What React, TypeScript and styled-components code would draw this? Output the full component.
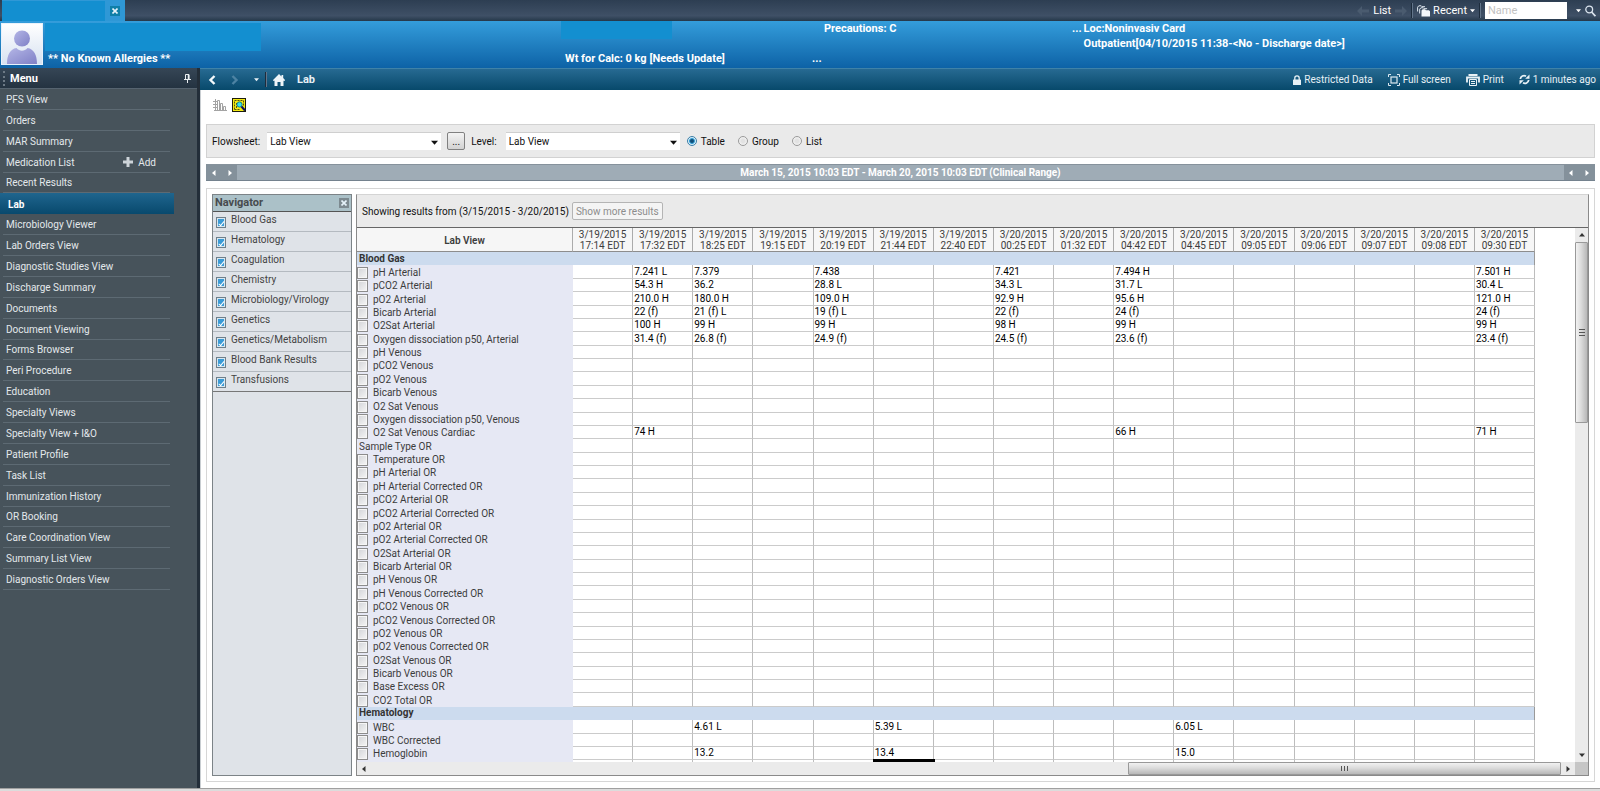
import React from 'react';
import styled, { createGlobalStyle, css } from 'styled-components';

const GlobalStyle = createGlobalStyle`
  *, *::before, *::after { box-sizing: border-box; }
  body { margin: 0; background: #fff; }
  body, button, input, select, table {
    font-family: Roboto, "Noto Sans", sans-serif;
    font-size: 10px;
    line-height: 15px;
  }
  button, input, select { margin: 0; padding: 0; border: 0; background: none; color: inherit; }
  svg { display: block; flex: none; }
`;

/* ---------- Shell ---------- */

const Shell = styled.div`
  display: flex;
  flex-direction: column;
  height: 100vh;
  padding-bottom: 2px;
  background: #dcdcdc;
`;

const Body = styled.div`
  flex: 1;
  min-height: 0;
  display: flex;
  border-bottom: 1px solid #a0a0a0;
`;

const Main = styled.main`
  flex: 1;
  min-width: 0;
  display: flex;
  flex-direction: column;
  background: #fff;
`;

/* ---------- Tab strip ---------- */

const TabStrip = styled.header`
  height: 21px;
  display: flex;
  justify-content: space-between;
  padding-left: 2px;
  color: #fff;
  font-size: 11px;
  background: linear-gradient(#2d3e52, #3f5066 75%, #25384a);
`;

const PatientTab = styled.div`
  width: 123px;
  display: flex;
  align-items: center;
  justify-content: space-between;
  padding-right: 5px;
  background: #2f98d6;
`;

const Redacted = styled.div<{ $width: number; $height: number }>`
  width: ${(p) => p.$width}px;
  height: ${(p) => p.$height}px;
  background: #138fd0;
`;

const CloseButton = styled.button<{ $muted?: boolean }>`
  width: 10px;
  height: 10px;
  display: grid;
  place-items: center;
  color: #e6f3fa;
  background: ${(p) => (p.$muted ? '#7d8a90' : '#0f7fa8')};
`;

const StripTools = styled.div`
  display: flex;
  align-items: center;
  gap: 4px;
  padding-right: 4px;
`;

const FlatButton = styled.button`
  display: flex;
  align-items: center;
  gap: 3px;
  color: inherit;
  white-space: nowrap;
  font-size: 11px;
`;

const Separator = styled.span`
  width: 2px;
  height: 15px;
  background: #1d2c3c;
  border-right: 1px solid #63758a;
`;

const NameSearch = styled.input`
  width: 82px;
  height: 17px;
  margin-right: 5px;
  padding: 0 3px;
  background: #fff;
  color: #333;
  font-size: 11px;
  &::placeholder { color: #c2c2c2; opacity: 1; }
`;

/* ---------- Patient banner ---------- */

const Banner = styled.section`
  height: 47px;
  display: grid;
  grid-template-columns: 561fr 251fr 260fr 528fr;
  color: #fff;
  font-size: 11px;
  font-weight: 700;
  white-space: nowrap;
  background: linear-gradient(#349ddb, #0d62a6);
`;

const BannerIdentity = styled.div`
  display: flex;
  gap: 2px;
  padding: 2px 0 0 1px;
`;

const Photo = styled.div`
  width: 42px;
  height: 42px;
  background: linear-gradient(#fff, #d7e2f1);
  border: 1px solid #e9f2fb;
`;

const BannerCell = styled.div`
  display: flex;
  flex-direction: column;
  justify-content: space-between;
  padding-bottom: 2px;
`;

const BannerStack = styled.div`
  display: flex;
  flex-direction: column;
`;

const BannerText = styled.span<{ $indent?: number }>`
  padding-left: ${(p) => p.$indent ?? 0}px;
`;

const Location = styled.div`
  display: flex;
  gap: 2px;
`;

/* ---------- Sidebar ---------- */

const Sidebar = styled.nav`
  width: 200px;
  flex: none;
  background: #47535b;
  border-right: 3px solid #232e39;
`;

const SidebarHead = styled.div`
  height: 21px;
  display: flex;
  align-items: center;
  justify-content: space-between;
  padding: 0 6px 0 3px;
  color: #fff;
  font-size: 11px;
  font-weight: 700;
  background: linear-gradient(#364656, #243341);
  border-bottom: 1px solid #566470;
`;

const HeadTitle = styled.span`
  padding-left: 5px;
  border-left: 2px dotted #6d7a86;
`;

const MenuList = styled.ul`
  margin: 0;
  padding: 0;
  list-style: none;
  height: 501px;
  display: grid;
  grid-auto-rows: 1fr;
`;

const MenuItem = styled.li<{ $active?: boolean }>`
  display: flex;
  align-items: center;
  justify-content: space-between;
  width: 167px;
  margin-left: 3px;
  padding: 1px 14px 0 3px;
  border-bottom: 1px solid #5d6a73;
  color: #e3e8eb;
  ${(p) =>
    p.$active &&
    css`
      width: 174px;
      margin-left: 0;
      padding-left: 8px;
      border-bottom: 0;
      color: #fff;
      font-weight: 700;
      background: linear-gradient(#1f658e, #08496d);
    `}
`;

const MenuLink = styled.a`
  color: inherit;
  text-decoration: none;
  white-space: nowrap;
`;

const AddButton = styled.button`
  display: flex;
  align-items: center;
  gap: 5px;
`;

/* ---------- Navigation bar ---------- */

const NavBar = styled.div`
  height: 22px;
  flex: none;
  display: flex;
  align-items: center;
  justify-content: space-between;
  padding: 0 4px 0 8px;
  color: #e8f1f6;
  background: linear-gradient(#276a92, #07496b);
  border-top: 1px solid #3f82a8;
`;

const NavGroup = styled.div<{ $gap: number }>`
  display: flex;
  align-items: center;
  gap: ${(p) => p.$gap}px;
`;

const NavAction = styled.button`
  display: flex;
  align-items: center;
  gap: 3px;
  white-space: nowrap;
`;

const PageTitle = styled.h1`
  margin: 0;
  font-size: 11px;
  line-height: 15px;
  font-weight: 700;
  padding-left: 6px;
`;

/* ---------- Content ---------- */

const Content = styled.div`
  flex: 1;
  min-height: 0;
  display: flex;
  flex-direction: column;
  gap: 6px;
  padding: 0 5px 6px 5px;
  border-left: 1px solid #c9ced2;
`;

const IconTools = styled.div`
  height: 22px;
  flex: none;
  display: flex;
  align-items: flex-end;
  gap: 5px;
  padding: 0 7px;
`;

const Filters = styled.form`
  height: 34px;
  margin-top: 6px;
  flex: none;
  display: flex;
  align-items: center;
  gap: 6px;
  padding: 0 5px;
  background: #eaeaea;
  border: 1px solid #d2d2d2;
  color: #111;
`;

const Field = styled.label<{ $gap: number }>`
  display: flex;
  align-items: center;
  gap: ${(p) => p.$gap}px;
`;

const SelectBox = styled.span`
  position: relative;
  width: 174px;
  height: 18px;
  background: #fff;
  border-top: 1px solid #cfcfcf;
`;

const Select = styled.select`
  appearance: none;
  display: block;
  width: 100%;
  height: 17px;
  padding: 0 20px 0 3px;
`;

const SelectArrow = styled.span`
  position: absolute;
  right: 3px;
  top: 6px;
  pointer-events: none;
`;

const PushButton = styled.button<{ $wide?: boolean }>`
  height: 18px;
  min-width: 18px;
  padding: 0 ${(p) => (p.$wide ? 3 : 0)}px;
  border: 1px solid ${(p) => (p.$wide ? '#b4b4b4' : '#808080')};
  border-radius: 2px;
  background: ${(p) => (p.$wide ? '#f4f4f4' : 'linear-gradient(#f3f3f3, #d2d2d2)')};
  color: ${(p) => (p.$wide ? '#8c8c8c' : '#111')};
`;

const RadioGroup = styled.div`
  display: flex;
  gap: 13px;
  padding-left: 1px;
`;

const Radio = styled.input`
  appearance: none;
  width: 10px;
  height: 10px;
  border: 1px solid #9a9a9a;
  border-radius: 50%;
  background: radial-gradient(#e2e2e2 30%, #fff);
  &:checked {
    border-color: #3b7ea6;
    background: radial-gradient(#124e77 25%, #3aa3d8 45%, #d8eefa 60%);
  }
`;

const RangeBar = styled.div`
  height: 17px;
  flex: none;
  display: flex;
  justify-content: space-between;
  align-items: stretch;
  color: #fff;
  font-weight: 700;
  background: #9facb6;
  border-top: 1px solid #86929c;
  border-bottom: 1px solid #74828e;
`;

const RangeArrows = styled.div`
  width: 31px;
  display: flex;
  align-items: center;
  justify-content: center;
  gap: 10px;
  background: #84919b;
`;

const Workspace = styled.div`
  flex: 1;
  min-height: 0;
  margin-top: 1px;
  display: flex;
  gap: 4px;
  padding: 5px;
  border: 1px solid #d6d6d6;
`;

/* ---------- Navigator ---------- */

const Navigator = styled.aside`
  width: 140px;
  flex: none;
  background: #dfe3e8;
  border: 1px solid #7c8387;
`;

const NavigatorHead = styled.div`
  height: 17px;
  display: flex;
  align-items: center;
  justify-content: space-between;
  padding: 0 2px 1px 2px;
  font-size: 11px;
  font-weight: 700;
  color: #474b4e;
  background: #abc1c8;
  border-bottom: 1px solid #555;
`;

const NavigatorRow = styled.label`
  height: 20px;
  display: flex;
  gap: 5px;
  padding-left: 3px;
  color: #444;
  border-bottom: 1px solid #b4bac0;
  &:last-child { border-bottom-color: #777; }
`;

const NavigatorCheck = styled.input`
  appearance: none;
  width: 10px;
  height: 11px;
  margin-top: 5px;
  display: grid;
  place-items: center;
  border: 1px solid #6f7f8a;
  background: #e8f2f8;
  &:checked { background: #3a9bd6; box-shadow: inset 0 0 0 1px #d8e8f2; }
  &:checked::after {
    content: '';
    width: 3px;
    height: 6px;
    border: solid #fff;
    border-width: 0 1px 1px 0;
    transform: rotate(40deg);
  }
`;

/* ---------- Results ---------- */

const Results = styled.section`
  flex: 1;
  min-width: 0;
  display: flex;
  flex-direction: column;
  background: #eaeaea;
  border: 1px solid #8a8a8a;
  border-top-color: #d4d4d4;
`;

const ResultsHead = styled.div`
  height: 33px;
  flex: none;
  display: flex;
  align-items: center;
  gap: 3px;
  padding: 0 5px;
  color: #111;
  border-bottom: 1px solid #666;
`;

const ScrollFrame = styled.div`
  flex: 1;
  min-height: 0;
  display: grid;
  grid-template: minmax(0, 1fr) 13px / minmax(0, 1fr) 13px;
`;

const Viewport = styled.div`
  overflow: hidden;
  background: #fff;
`;

const Sheet = styled.table`
  table-layout: fixed;
  width: calc(100% - 40px);
  height: 546px;
  border-collapse: separate;
  border-spacing: 0;
  line-height: 12px;
  color: #222;
`;

const LabelColumn = styled.col`
  width: 216px;
`;

const HeadCell = styled.th`
  height: 24px;
  padding: 1px 0 0;
  font-weight: 400;
  line-height: 11px;
  color: #3c3c3c;
  background: #f6f6f6;
  border-right: 1px solid #ababab;
  border-bottom: 1px solid #8d8d8d;
  &:first-child { font-weight: 600; }
`;

const SectionCell = styled.th`
  height: 13px;
  padding: 0 2px;
  text-align: left;
  font-weight: 700;
  color: #333;
  background: #ccdbee;
  border-right: 1px solid #999;
`;

const LabelCell = styled.th`
  height: 13px;
  vertical-align: bottom;
  padding: 0;
  text-align: left;
  font-weight: 400;
  color: #3c3c3c;
  background: #e6e8f4;
`;

const RowLabel = styled.label`
  display: flex;
  align-items: center;
  gap: 5px;
  height: 12px;
  white-space: nowrap;
`;

const GroupLabel = styled.span`
  padding-left: 2px;
`;

const RowCheck = styled.input`
  appearance: none;
  width: 11px;
  height: 12px;
  border: 1px solid #8c8c8c;
  background: linear-gradient(135deg, #d2d4d8, #f6f6f6);
  box-shadow: inset 0 0 0 1px #f6f6f6;
`;

const ValueCell = styled.td<{ $selected?: boolean }>`
  height: 13px;
  vertical-align: bottom;
  padding: 0 1px;
  white-space: nowrap;
  color: #000;
  border-right: 1px solid #bdbdbd;
  border-bottom: 1px solid #cbcbcb;
  ${(p) => p.$selected && css`outline: 3px solid #000; outline-offset: -2px;`}
`;

const ScrollTrack = styled.div<{ $vertical?: boolean }>`
  display: flex;
  flex-direction: ${(p) => (p.$vertical ? 'column' : 'row')};
  background: #ebebeb;
`;

const TrackSpace = styled.div<{ $grow: number }>`
  flex: ${(p) => p.$grow} 1 0;
`;

const ScrollButton = styled.button<{ $vertical?: boolean }>`
  flex: none;
  width: ${(p) => (p.$vertical ? 13 : 14)}px;
  height: ${(p) => (p.$vertical ? 14 : 13)}px;
  display: grid;
  place-items: center;
  color: #333;
`;

const Thumb = styled.div<{ $vertical?: boolean; $grow: number }>`
  flex: ${(p) => p.$grow} 1 0;
  display: grid;
  place-items: center;
  border: 1px solid #999;
  border-radius: 1px;
  background: linear-gradient(${(p) => (p.$vertical ? '90deg' : '180deg')}, #f2f2f2, #dcdcdc 45%, #b8b8b8);
`;

const ScrollCorner = styled.div`
  background: #c6c6c6;
`;

/* ---------- Icons ---------- */

type Direction = 'up' | 'down' | 'left' | 'right';

const turns: Record<Direction, number> = { down: 0, left: 90, up: 180, right: 270 };

const Triangle = ({ dir = 'down', size = 6 }: { dir?: Direction; size?: number }) => (
  <svg width={size} height={size} viewBox="0 0 6 6">
    <path d="M0 1.5h6L3 5z" fill="currentColor" transform={`rotate(${turns[dir]} 3 3)`} />
  </svg>
);

const CrossIcon = () => (
  <svg width="6" height="6" viewBox="0 0 6 6" stroke="currentColor" strokeWidth="1.6">
    <path d="M.5.5l5 5M5.5.5l-5 5" />
  </svg>
);

const ArrowIcon = ({ flip }: { flip?: boolean }) => (
  <svg width="12" height="10" viewBox="0 0 12 10" fill="#4a5b6f">
    <path d="M0 5l5-5v3.5h7v3H5V10z" transform={flip ? 'rotate(180 6 5)' : undefined} />
  </svg>
);

const RecentIcon = () => (
  <svg width="13" height="12" viewBox="0 0 13 12">
    <g fill="none" stroke="#dfe7ef">
      <path d="M.6 6.5V2.2L1.800.8h2.400l.8.9h3" />
      <path d="M2.700 8.500V4.200L3.900 2.800h2.400l.8.9h3" />
    </g>
    <path d="M4.500 11.500V5.600l1.200-1.300h2.300l.9 1h3l1.100 1v5.200z" fill="#f4f7fa" />
  </svg>
);

const SearchIcon = () => (
  <svg width="11" height="12" viewBox="0 0 11 12" fill="none" stroke="#dbe4ee">
    <circle cx="4.2" cy="4.5" r="3.4" strokeWidth="1.3" />
    <path d="M6.6 7l3.8 4.2" strokeWidth="1.7" />
  </svg>
);

const PersonIcon = () => (
  <svg width="40" height="40" viewBox="0 0 40 40">
    <defs>
      <linearGradient id="person" x1="0" y1="0" x2="1" y2="1">
        <stop offset="0" stopColor="#b4b6e6" />
        <stop offset="1" stopColor="#7f80c6" />
      </linearGradient>
    </defs>
    <circle cx="20" cy="14.500" r="8" fill="url(#person)" />
    <path d="M5 40c0-9 3-15 9.500-16 3 3.600 8 3.600 11 0 6.500 1 9.500 7 9.500 16z" fill="url(#person)" />
  </svg>
);

const PinIcon = () => (
  <svg width="7" height="9" viewBox="0 0 7 9" fill="none" stroke="#e9edf0">
    <path d="M1.500 5V.5h3.500V5M0 5.500h7M3.500 5.500V9" />
    <path d="M4.500 1v4" strokeWidth="1.5" />
  </svg>
);

const PlusIcon = () => (
  <svg width="10" height="10" viewBox="0 0 10 10" fill="#cdd4d9">
    <path d="M3.500 0h3v3.500H10v3H6.500V10h-3V6.500H0v-3h3.500z" />
  </svg>
);

const ChevronIcon = ({ flip }: { flip?: boolean }) => (
  <svg width="8" height="10" viewBox="0 0 8 10" fill="none" stroke={flip ? '#4d83a3' : '#f4f9fc'} strokeWidth="2.4">
    <path d={flip ? 'M1.500 1l4 4-4 4' : 'M6.500 1l-4 4 4 4'} />
  </svg>
);

const HomeIcon = () => (
  <svg width="12" height="12" viewBox="0 0 12 12" fill="#eef4f8">
    <path d="M6 0l2.500 2.400V1h1.700v3L12 6v.8h-1.500V12h-3V8h-3v4h-3V6.800H0V6z" />
  </svg>
);

const LockIcon = () => (
  <svg width="8" height="10" viewBox="0 0 8 10">
    <path d="M1.800 5V3a2.200 2.200 0 0 1 4.400 0v2" fill="none" stroke="#e8f1f6" strokeWidth="1.3" />
    <rect y="4.500" width="8" height="5.500" rx=".6" fill="#e8f1f6" />
  </svg>
);

const FullScreenIcon = () => (
  <svg width="12" height="12" viewBox="0 0 12 12" fill="none" stroke="#dce9f1">
    <path d="M.5 3V.5H3M9 .5h2.500V3M11.500 9v2.500H9M3 11.500H.5V9" />
    <rect x="3" y="3" width="6" height="6" strokeWidth="1.2" />
  </svg>
);

const PrintIcon = () => (
  <svg width="14" height="12" viewBox="0 0 14 12" fill="none" stroke="#e8f1f6">
    <path d="M2.500 1h9" strokeWidth="2" />
    <path d="M1 8.500v-5h12v5" strokeWidth="1.8" />
    <path d="M3.500 5.500h7v6h-7zM5 7.500h4M5 9.500h4" />
  </svg>
);

const RefreshIcon = () => (
  <svg width="11" height="11" viewBox="0 0 11 11">
    <path d="M1.300 5A3.800 3.800 0 0 1 7 2.200M9.700 6A3.800 3.800 0 0 1 4 8.800" fill="none" stroke="#e8f1f6" strokeWidth="1.8" />
    <path d="M10.500.5v4.300H6.200zM.5 10.500V6.200h4.300z" fill="#e8f1f6" />
  </svg>
);

const GraphIcon = () => (
  <svg width="14" height="14" viewBox="0 0 14 14" fill="none" stroke="#a3a3a3">
    <path d="M2.500 1v12M0 3.500h5M0 6.500h5M0 9.500h4M1 12.500h13" />
    <path d="M4.500 12V2.500h2V12M7.500 12V5.500h2V12M10.500 12V8.500h2V12" />
  </svg>
);

const FindResultsIcon = () => (
  <svg width="14" height="14" viewBox="0 0 14 14">
    <rect x=".5" y=".5" width="13" height="13" fill="#f3ea13" stroke="#1d1d0c" />
    <path d="M2.500 11.500v-9h9v6M2.500 11.500h5M4.500 5v5" fill="none" stroke="#55520a" strokeDasharray="2 1" />
    <circle cx="7.500" cy="6.500" r="2.600" fill="#35e0ee" stroke="#157f8c" />
    <path d="M9.500 8.500l3.500 4" stroke="#10105e" strokeWidth="2" />
  </svg>
);

const GripIcon = ({ vertical }: { vertical?: boolean }) => (
  <svg width="8" height="8" viewBox="0 0 8 8" stroke="#555">
    <path d={vertical ? 'M1 1.500h6M1 4.500h6M1 7.500h6' : 'M1.500 1v5M4.500 1v5M7.500 1v5'} />
  </svg>
);

/* ---------- Data ---------- */

const menuItems = [
  'PFS View', 'Orders', 'MAR Summary', 'Medication List', 'Recent Results', 'Lab',
  'Microbiology Viewer', 'Lab Orders View', 'Diagnostic Studies View', 'Discharge Summary',
  'Documents', 'Document Viewing', 'Forms Browser', 'Peri Procedure', 'Education',
  'Specialty Views', 'Specialty View + I&O', 'Patient Profile', 'Task List',
  'Immunization History', 'OR Booking', 'Care Coordination View', 'Summary List View',
  'Diagnostic Orders View',
];

const navigatorItems = [
  'Blood Gas', 'Hematology', 'Coagulation', 'Chemistry', 'Microbiology/Virology',
  'Genetics', 'Genetics/Metabolism', 'Blood Bank Results', 'Transfusions',
];

const columns: [string, string][] = [
  ['3/19/2015', '17:14 EDT'], ['3/19/2015', '17:32 EDT'], ['3/19/2015', '18:25 EDT'],
  ['3/19/2015', '19:15 EDT'], ['3/19/2015', '20:19 EDT'], ['3/19/2015', '21:44 EDT'],
  ['3/19/2015', '22:40 EDT'], ['3/20/2015', '00:25 EDT'], ['3/20/2015', '01:32 EDT'],
  ['3/20/2015', '04:42 EDT'], ['3/20/2015', '04:45 EDT'], ['3/20/2015', '09:05 EDT'],
  ['3/20/2015', '09:06 EDT'], ['3/20/2015', '09:07 EDT'], ['3/20/2015', '09:08 EDT'],
  ['3/20/2015', '09:30 EDT'],
];

type Row = {
  label: string;
  kind?: 'section' | 'group';
  values?: Record<number, string>;
  selected?: number;
};

const plain = (labels: string[]): Row[] => labels.map((label) => ({ label }));

const rows: Row[] = [
  { label: 'Blood Gas', kind: 'section' },
  { label: 'pH Arterial', values: { 1: '7.241 L', 2: '7.379', 4: '7.438', 7: '7.421', 9: '7.494 H', 15: '7.501 H' } },
  { label: 'pCO2 Arterial', values: { 1: '54.3 H', 2: '36.2', 4: '28.8 L', 7: '34.3 L', 9: '31.7 L', 15: '30.4 L' } },
  { label: 'pO2 Arterial', values: { 1: '210.0 H', 2: '180.0 H', 4: '109.0 H', 7: '92.9 H', 9: '95.6 H', 15: '121.0 H' } },
  { label: 'Bicarb Arterial', values: { 1: '22 (f)', 2: '21 (f) L', 4: '19 (f) L', 7: '22 (f)', 9: '24 (f)', 15: '24 (f)' } },
  { label: 'O2Sat Arterial', values: { 1: '100 H', 2: '99 H', 4: '99 H', 7: '98 H', 9: '99 H', 15: '99 H' } },
  { label: 'Oxygen dissociation p50, Arterial', values: { 1: '31.4 (f)', 2: '26.8 (f)', 4: '24.9 (f)', 7: '24.5 (f)', 9: '23.6 (f)', 15: '23.4 (f)' } },
  ...plain(['pH Venous', 'pCO2 Venous', 'pO2 Venous', 'Bicarb Venous', 'O2 Sat Venous', 'Oxygen dissociation p50, Venous']),
  { label: 'O2 Sat Venous Cardiac', values: { 1: '74 H', 9: '66 H', 15: '71 H' } },
  { label: 'Sample Type OR', kind: 'group' },
  ...plain([
    'Temperature OR', 'pH Arterial OR', 'pH Arterial Corrected OR', 'pCO2 Arterial OR',
    'pCO2 Arterial Corrected OR', 'pO2 Arterial OR', 'pO2 Arterial Corrected OR', 'O2Sat Arterial OR',
    'Bicarb Arterial OR', 'pH Venous OR', 'pH Venous Corrected OR', 'pCO2 Venous OR',
    'pCO2 Venous Corrected OR', 'pO2 Venous OR', 'pO2 Venous Corrected OR', 'O2Sat Venous OR',
    'Bicarb Venous OR', 'Base Excess OR', 'CO2 Total OR',
  ]),
  { label: 'Hematology', kind: 'section' },
  { label: 'WBC', values: { 2: '4.61 L', 5: '5.39 L', 10: '6.05 L' } },
  { label: 'WBC Corrected' },
  { label: 'Hemoglobin', values: { 2: '13.2', 5: '13.4', 10: '15.0' } },
  { label: '', selected: 5 },
];

/* ---------- Parts ---------- */

const SheetRow = ({ row }: { row: Row }) => {
  if (row.kind === 'section') {
    return (
      <tr>
        <SectionCell colSpan={columns.length + 1} scope="colgroup">{row.label}</SectionCell>
      </tr>
    );
  }
  return (
    <tr>
      <LabelCell scope="row">
        {row.kind === 'group' ? (
          <GroupLabel>{row.label}</GroupLabel>
        ) : (
          <RowLabel>
            <RowCheck type="checkbox" aria-label={row.label || 'Result row'} />
            {row.label}
          </RowLabel>
        )}
      </LabelCell>
      {columns.map((_, i) => (
        <ValueCell key={i} $selected={row.selected === i}>{row.values?.[i]}</ValueCell>
      ))}
    </tr>
  );
};

const Dropdown = ({ id, value }: { id: string; value: string }) => (
  <SelectBox>
    <Select id={id} defaultValue={value}>
      <option>{value}</option>
    </Select>
    <SelectArrow><Triangle size={7} /></SelectArrow>
  </SelectBox>
);

const RangeStepper = () => (
  <RangeArrows>
    <FlatButton aria-label="Earlier"><Triangle dir="left" /></FlatButton>
    <FlatButton aria-label="Later"><Triangle dir="right" /></FlatButton>
  </RangeArrows>
);

export default function App() {
  return (
    <Shell>
      <GlobalStyle />
      <TabStrip>
        <PatientTab>
          <Redacted $width={103} $height={20} />
          <CloseButton aria-label="Close chart"><CrossIcon /></CloseButton>
        </PatientTab>
        <StripTools>
          <FlatButton aria-label="Previous patient"><ArrowIcon /></FlatButton>
          <FlatButton>List</FlatButton>
          <FlatButton aria-label="Next patient"><ArrowIcon flip /></FlatButton>
          <Separator />
          <FlatButton><RecentIcon />Recent<Triangle size={5} /></FlatButton>
          <Separator />
          <NameSearch placeholder="Name" aria-label="Name" />
          <FlatButton aria-label="Search options"><Triangle size={5} /></FlatButton>
          <FlatButton aria-label="Search"><SearchIcon /></FlatButton>
        </StripTools>
      </TabStrip>

      <Banner>
        <BannerIdentity>
          <Photo><PersonIcon /></Photo>
          <BannerStack>
            <Redacted $width={216} $height={28} />
            <BannerText $indent={3}>** No Known Allergies **</BannerText>
          </BannerStack>
        </BannerIdentity>
        <BannerCell>
          <Redacted $width={111} $height={18} />
          <BannerText $indent={4}>Wt for Calc: 0 kg [Needs Update]</BannerText>
        </BannerCell>
        <BannerCell>
          <BannerText $indent={12}>Precautions: C</BannerText>
          <BannerText>...</BannerText>
        </BannerCell>
        <BannerCell>
          <Location>
            <span>...</span>
            <BannerStack>
              <span>Loc:Noninvasiv Card</span>
              <span>Outpatient[04/10/2015 11:38-&lt;No - Discharge date&gt;]</span>
            </BannerStack>
          </Location>
        </BannerCell>
      </Banner>

      <Body>
        <Sidebar>
          <SidebarHead>
            <HeadTitle>Menu</HeadTitle>
            <FlatButton aria-label="Pin menu"><PinIcon /></FlatButton>
          </SidebarHead>
          <MenuList>
            {menuItems.map((item) => (
              <MenuItem key={item} $active={item === 'Lab'}>
                <MenuLink href="#">{item}</MenuLink>
                {item === 'Medication List' && <AddButton><PlusIcon />Add</AddButton>}
              </MenuItem>
            ))}
          </MenuList>
        </Sidebar>

        <Main>
          <NavBar>
            <NavGroup $gap={6}>
              <NavGroup $gap={15}>
                <FlatButton aria-label="Back"><ChevronIcon /></FlatButton>
                <FlatButton aria-label="Forward"><ChevronIcon flip /></FlatButton>
                <FlatButton aria-label="History"><Triangle size={5} /></FlatButton>
              </NavGroup>
              <Separator />
              <FlatButton aria-label="Home"><HomeIcon /></FlatButton>
              <PageTitle>Lab</PageTitle>
            </NavGroup>
            <NavGroup $gap={15}>
              <NavAction><LockIcon />Restricted Data</NavAction>
              <NavAction><FullScreenIcon />Full screen</NavAction>
              <NavAction><PrintIcon />Print</NavAction>
              <NavAction><RefreshIcon />1 minutes ago</NavAction>
            </NavGroup>
          </NavBar>

          <Content>
            <IconTools>
              <FlatButton aria-label="Graph"><GraphIcon /></FlatButton>
              <FlatButton aria-label="Find results"><FindResultsIcon /></FlatButton>
            </IconTools>
            <Filters onSubmit={(e) => e.preventDefault()}>
              <Field $gap={7} htmlFor="flowsheet">
                Flowsheet:
                <Dropdown id="flowsheet" value="Lab View" />
              </Field>
              <PushButton type="button" aria-label="Choose flowsheet">...</PushButton>
              <Field $gap={9} htmlFor="level">
                Level:
                <Dropdown id="level" value="Lab View" />
              </Field>
              <RadioGroup>
                {['Table', 'Group', 'List'].map((mode) => (
                  <Field key={mode} $gap={4}>
                    <Radio type="radio" name="mode" defaultChecked={mode === 'Table'} />
                    {mode}
                  </Field>
                ))}
              </RadioGroup>
            </Filters>
            <RangeBar>
              <RangeStepper />
              <span>March 15, 2015 10:03 EDT - March 20, 2015 10:03 EDT (Clinical Range)</span>
              <RangeStepper />
            </RangeBar>

            <Workspace>
              <Navigator>
                <NavigatorHead>
                  Navigator
                  <CloseButton $muted aria-label="Close navigator"><CrossIcon /></CloseButton>
                </NavigatorHead>
                {navigatorItems.map((item) => (
                  <NavigatorRow key={item}>
                    <NavigatorCheck type="checkbox" defaultChecked />
                    {item}
                  </NavigatorRow>
                ))}
              </Navigator>

              <Results>
                <ResultsHead>
                  <span>Showing results from (3/15/2015 - 3/20/2015)</span>
                  <PushButton $wide disabled>Show more results</PushButton>
                </ResultsHead>
                <ScrollFrame>
                  <Viewport>
                    <Sheet>
                      <colgroup>
                        <LabelColumn />
                        {columns.map((_, i) => <col key={i} />)}
                      </colgroup>
                      <thead>
                        <tr>
                          <HeadCell scope="col">Lab View</HeadCell>
                          {columns.map(([date, time]) => (
                            <HeadCell key={date + time} scope="col">{date}<br />{time}</HeadCell>
                          ))}
                        </tr>
                      </thead>
                      <tbody>
                        {rows.map((row, i) => <SheetRow key={i} row={row} />)}
                      </tbody>
                    </Sheet>
                  </Viewport>
                  <ScrollTrack $vertical>
                    <ScrollButton $vertical aria-label="Scroll up"><Triangle dir="up" /></ScrollButton>
                    <Thumb $vertical $grow={180}><GripIcon vertical /></Thumb>
                    <TrackSpace $grow={327} />
                    <ScrollButton $vertical aria-label="Scroll down"><Triangle /></ScrollButton>
                  </ScrollTrack>
                  <ScrollTrack>
                    <ScrollButton aria-label="Scroll left"><Triangle dir="left" /></ScrollButton>
                    <TrackSpace $grow={758} />
                    <Thumb $grow={432}><GripIcon /></Thumb>
                    <ScrollButton aria-label="Scroll right"><Triangle dir="right" /></ScrollButton>
                  </ScrollTrack>
                  <ScrollCorner />
                </ScrollFrame>
              </Results>
            </Workspace>
          </Content>
        </Main>
      </Body>
    </Shell>
  );
}
